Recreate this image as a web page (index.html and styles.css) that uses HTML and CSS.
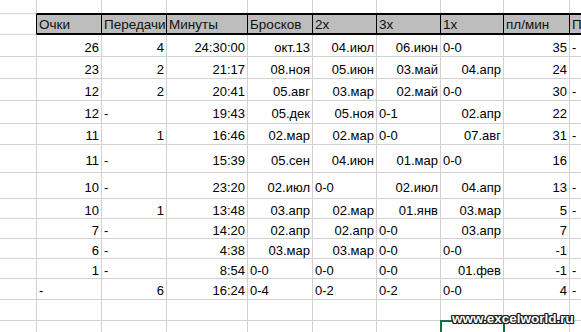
FILE: index.html
```html
<!DOCTYPE html>
<html lang="ru">
<head>
<meta charset="utf-8">
<title>Статистика</title>
<link rel="stylesheet" href="styles.css">
</head>
<body>
<div class="wrap">
  <div class="sheet">
    <div class="c top"></div><div class="c top"></div><div class="c top"></div><div class="c top"></div><div class="c top"></div><div class="c top"></div><div class="c top"></div><div class="c top"></div><div class="c top"></div><div class="c top"></div>

    <div class="c hd0"></div><div class="c h">Очки</div><div class="c h">Передачи</div><div class="c h">Минуты</div><div class="c h">Бросков</div><div class="c h">2х</div><div class="c h">3х</div><div class="c h">1х</div><div class="c h">пл/мин</div><div class="c h">П</div>

    <div class="c"></div><div class="c n">26</div><div class="c n">4</div><div class="c n">24:30:00</div><div class="c n">окт.13</div><div class="c n">04.июл</div><div class="c n">06.июн</div><div class="c">0-0</div><div class="c n">35</div><div class="c">-</div>

    <div class="c"></div><div class="c n">23</div><div class="c n">2</div><div class="c n">21:17</div><div class="c n">08.ноя</div><div class="c n">05.июн</div><div class="c n">03.май</div><div class="c n">04.апр</div><div class="c n">24</div><div class="c"></div>

    <div class="c"></div><div class="c n">12</div><div class="c n">2</div><div class="c n">20:41</div><div class="c n">05.авг</div><div class="c n">03.мар</div><div class="c n">02.май</div><div class="c">0-0</div><div class="c n">30</div><div class="c">-</div>

    <div class="c"></div><div class="c n">12</div><div class="c">-</div><div class="c n">19:43</div><div class="c n">05.дек</div><div class="c n">05.ноя</div><div class="c">0-1</div><div class="c n">02.апр</div><div class="c n">22</div><div class="c"></div>

    <div class="c"></div><div class="c n">11</div><div class="c n">1</div><div class="c n">16:46</div><div class="c n">02.мар</div><div class="c n">02.мар</div><div class="c">0-0</div><div class="c n">07.авг</div><div class="c n">31</div><div class="c">-</div>

    <div class="c"></div><div class="c n">11</div><div class="c">-</div><div class="c n">15:39</div><div class="c n">05.сен</div><div class="c n">04.июн</div><div class="c n">01.мар</div><div class="c">0-0</div><div class="c n">16</div><div class="c"></div>

    <div class="c"></div><div class="c n">10</div><div class="c">-</div><div class="c n">23:20</div><div class="c n">02.июл</div><div class="c">0-0</div><div class="c n">02.июл</div><div class="c n">04.апр</div><div class="c n">13</div><div class="c">-</div>

    <div class="c"></div><div class="c n">10</div><div class="c n">1</div><div class="c n">13:48</div><div class="c n">03.апр</div><div class="c n">02.мар</div><div class="c n">01.янв</div><div class="c n">03.мар</div><div class="c n">5</div><div class="c">-</div>

    <div class="c"></div><div class="c n">7</div><div class="c">-</div><div class="c n">14:20</div><div class="c n">02.апр</div><div class="c n">02.апр</div><div class="c">0-0</div><div class="c n">03.апр</div><div class="c n">7</div><div class="c"></div>

    <div class="c"></div><div class="c n">6</div><div class="c">-</div><div class="c n">4:38</div><div class="c n">03.мар</div><div class="c n">03.мар</div><div class="c">0-0</div><div class="c">0-0</div><div class="c n">-1</div><div class="c"></div>

    <div class="c"></div><div class="c n">1</div><div class="c">-</div><div class="c n">8:54</div><div class="c">0-0</div><div class="c">0-0</div><div class="c">0-0</div><div class="c n">01.фев</div><div class="c n">-1</div><div class="c">-</div>

    <div class="c"></div><div class="c">-</div><div class="c n">6</div><div class="c n">16:24</div><div class="c">0-4</div><div class="c">0-2</div><div class="c">0-2</div><div class="c">0-0</div><div class="c n">4</div><div class="c">-</div>

    <div class="c"></div><div class="c"></div><div class="c"></div><div class="c"></div><div class="c"></div><div class="c"></div><div class="c"></div><div class="c"></div><div class="c"></div><div class="c"></div>

    <div class="c"></div><div class="c"></div><div class="c"></div><div class="c"></div><div class="c"></div><div class="c"></div><div class="c"></div><div class="c sel"></div><div class="c"></div><div class="c"></div>
  </div>
  <div class="mark">www.excelworld.ru</div>
</div>
</body>
</html>
```

FILE: styles.css
```css
html, body {
  margin: 0;
  padding: 0;
  background: #fff;
  overflow: hidden;
}

.wrap {
  position: relative;
  width: 581px;
  height: 332px;
  overflow: hidden;
}

.sheet {
  display: grid;
  grid-template-columns: 37px 65px 65px 81px 65px 64px 64px 63px 66px 80px;
  grid-template-rows: 13px 22px 22px 22px 22px 23px 21px 28px 26px 20px 20px 20px 20px 21px 21px 20px;
  width: 650px;
  font-family: "Liberation Sans", Arial, sans-serif;
  font-size: 13px;
  line-height: 15px;
  color: #000;
}

.c {
  box-sizing: border-box;
  display: flex;
  align-items: center;
  justify-content: flex-start;
  padding: 3px 2px 0 2px;
  border-right: 1px solid #d2d2d2;
  border-bottom: 1px solid #d2d2d2;
  white-space: nowrap;
  overflow: hidden;
}

.c.n {
  justify-content: flex-end;
}

.c.top {
  border-bottom: none;
}

.c.hd0 {
  border-top: 1px solid #d2d2d2;
  border-right: 1px solid #000;
}

.c.h {
  background: #bdbdbd;
  color: #111;
  font-size: 13.5px;
  border-top: 2px solid #000;
  border-bottom: 2px solid #000;
  border-right: 1px solid #000;
  padding-top: 1px;
}

.c.sel {
  overflow: visible;
  outline: 2px solid #1f6b43;
  outline-offset: -1px;
}

.mark {
  position: absolute;
  left: 452px;
  top: 311px;
  font-family: "Liberation Sans", Arial, sans-serif;
  font-weight: bold;
  font-size: 13.5px;
  line-height: 16px;
  color: #fff;
  text-shadow:
    -1px -1px 0 #1e1e1e, 1px -1px 0 #1e1e1e,
    -1px 1px 0 #1e1e1e, 1px 1px 0 #1e1e1e,
    0 -1px 0 #1e1e1e, 0 1px 0 #1e1e1e,
    -1px 0 0 #1e1e1e, 1px 0 0 #1e1e1e,
    0 0 2px #000;
}
```
